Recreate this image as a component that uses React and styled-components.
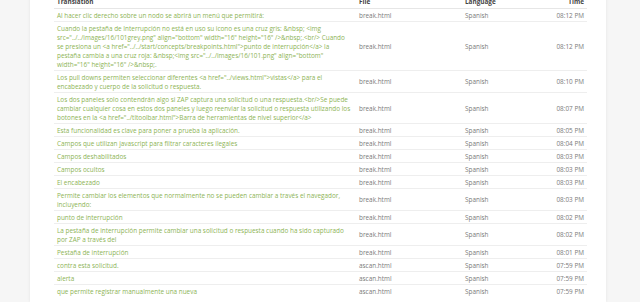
import React from "react";
import styled, { createGlobalStyle } from "styled-components";

const Global = createGlobalStyle`
  html, body { margin: 0; padding: 0; background: #f6f6f6; overflow: hidden; }
  body { font-family: "Open Sans", "Liberation Sans", sans-serif; }
`;

const Page = styled.div`
  width: 640px;
  height: 302px;
  overflow: hidden;
  display: flex;
`;

const Card = styled.div`
  margin-left: 30px;
  width: 576px;
  margin-top: -5px;
  background: #fff;
  box-shadow: 0 0 3px rgba(0, 0, 0, 0.08);
  padding: 0 19px 0 24px;
  box-sizing: border-box;
`;

const Table = styled.table`
  width: 100%;
  border-collapse: collapse;
  font-size: 6.4px;
  line-height: 9px;
  color: #777;
`;

const Th = styled.th`
  text-align: ${(p) => (p.$right ? "right" : "left")};
  font-weight: 700;
  color: #444;
  padding: 2px 3px 2px 3px;
  border-bottom: 1px solid #e6e6e6;
  width: ${(p) => p.$w || "auto"};
`;

const Td = styled.td`
  padding: 1.5px 3px;
  border-top: 1px solid #eeeeee;
  vertical-align: middle;
  text-align: ${(p) => (p.$right ? "right" : "left")};
  color: ${(p) => (p.$green ? "#8db455" : "#7a7a7a")};
`;

const rows = [
  ["Al hacer clic derecho sobre un nodo se abrirá un menú que permitirá:", "break.html", "08:12 PM"],
  [
    'Cuando la pestaña de Interrupción no está en uso su icono es una cruz gris: &nbsp; <img src="../../images/16/101grey.png" align="bottom" width="16" height="16" />&nbsp;.<br/> Cuando se presiona un <a href="../../start/concepts/breakpoints.html">punto de interrupción</a> la pestaña cambia a una cruz roja: &nbsp;<img src="../../images/16/101.png" align="bottom" width="16" height="16" />&nbsp;.',
    "break.html",
    "08:12 PM",
  ],
  ['Los pull downs permiten seleccionar diferentes <a href="../views.html">vistas</a> para el encabezado y cuerpo de la solicitud o respuesta.', "break.html", "08:10 PM"],
  [
    'Los dos paneles solo contendrán algo si ZAP captura una solicitud o una respuesta.<br/>Se puede cambiar cualquier cosa en estos dos paneles y luego reenviar la solicitud o respuesta utilizando los botones en la <a href="../tltoolbar.html">Barra de herramientas de nivel superior</a>',
    "break.html",
    "08:07 PM",
  ],
  ["Esta funcionalidad es clave para poner a prueba la aplicación.", "break.html", "08:05 PM"],
  ["Campos que utilizan javascript para filtrar caracteres ilegales", "break.html", "08:04 PM"],
  ["Campos deshabilitados", "break.html", "08:03 PM"],
  ["Campos ocultos", "break.html", "08:03 PM"],
  ["El encabezado", "break.html", "08:03 PM"],
  ["Permite cambiar los elementos que normalmente no se pueden cambiar a través el navegador, incluyendo:", "break.html", "08:03 PM"],
  ["punto de interrupción", "break.html", "08:02 PM"],
  ["La pestaña de interrupción permite cambiar una solicitud o respuesta cuando ha sido capturado por ZAP a través del", "break.html", "08:02 PM"],
  ["Pestaña de interrupción", "break.html", "08:01 PM"],
  ["contra esta solicitud.", "ascan.html", "07:59 PM"],
  ["alerta", "ascan.html", "07:59 PM"],
  ["que permite registrar manualmente una nueva", "ascan.html", "07:59 PM"],
];

export default function App() {
  return (
    <Page>
      <Global />
      <Card>
        <Table>
          <thead>
            <tr>
              <Th $w="296px">Translation</Th>
              <Th $w="100px">File</Th>
              <Th>Language</Th>
              <Th $right>Time</Th>
            </tr>
          </thead>
          <tbody>
            {rows.map(([t, f, time], i) => (
              <tr key={i}>
                <Td $green>{t}</Td>
                <Td>{f}</Td>
                <Td>Spanish</Td>
                <Td $right>{time}</Td>
              </tr>
            ))}
          </tbody>
        </Table>
      </Card>
    </Page>
  );
}
